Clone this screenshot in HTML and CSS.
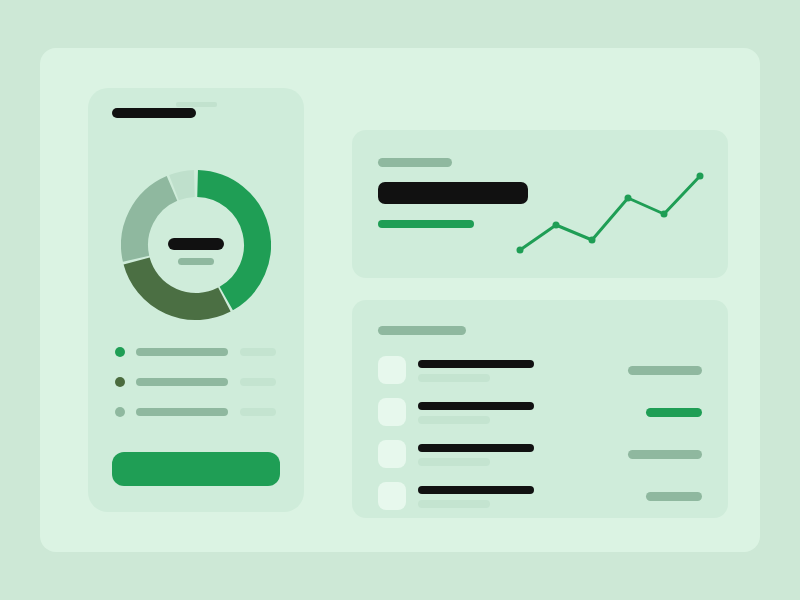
FILE: index.html
```html
<!DOCTYPE html>
<html>
<head>
<meta charset="utf-8">
<link rel="stylesheet" href="styles.css">
</head>
<body>
<div class="panel">
  <div class="side-card">
    <div class="notch"></div>
    <div class="bar title-bar"></div>
    <div class="donut">
      <svg width="150" height="150" viewBox="0 0 150 150">
        <g fill="none" stroke-width="27">
          <path d="M76.61 13.52 A61.5 61.5 0 0 1 105.28 128.53" stroke="#1f9e55"/>
          <path d="M103.40 129.55 A61.5 61.5 0 0 1 15.60 90.92" stroke="#4b6f43"/>
          <path d="M15.08 88.83 A61.5 61.5 0 0 1 50.97 18.39" stroke="#8fb89f"/>
          <path d="M52.96 17.58 A61.5 61.5 0 0 1 73.39 13.52" stroke="#bfe0cc"/>
        </g>
      </svg>
      <div class="donut-center">
        <div class="bar donut-value"></div>
        <div class="bar donut-label"></div>
      </div>
    </div>
    <div class="legend">
      <div class="legend-row"><span class="dot dot-green"></span><span class="bar legend-name"></span><span class="bar legend-val"></span></div>
      <div class="legend-row"><span class="dot dot-dark"></span><span class="bar legend-name"></span><span class="bar legend-val"></span></div>
      <div class="legend-row"><span class="dot dot-grey"></span><span class="bar legend-name"></span><span class="bar legend-val"></span></div>
    </div>
    <div class="button"></div>
  </div>
  <div class="main-col">
    <div class="card stat-card">
      <div class="stat-text">
        <div class="bar stat-label"></div>
        <div class="bar stat-value"></div>
        <div class="bar stat-delta"></div>
      </div>
      <svg class="chart" width="188" height="86" viewBox="0 0 188 86">
        <polyline points="4,80 40,55 76,70 112,28 148,44 184,6" fill="none" stroke="#1f9e55" stroke-width="3" stroke-linejoin="round" stroke-linecap="round"/>
        <g fill="#1f9e55">
          <circle cx="4" cy="80" r="3.5"/>
          <circle cx="40" cy="55" r="3.5"/>
          <circle cx="76" cy="70" r="3.5"/>
          <circle cx="112" cy="28" r="3.5"/>
          <circle cx="148" cy="44" r="3.5"/>
          <circle cx="184" cy="6" r="3.5"/>
        </g>
      </svg>
    </div>
    <div class="card list-card">
      <div class="bar list-label"></div>
      <div class="list">
        <div class="list-row">
          <div class="thumb"></div>
          <div class="row-text"><div class="bar row-title"></div><div class="bar row-sub"></div></div>
          <div class="bar row-val grey wide"></div>
        </div>
        <div class="list-row">
          <div class="thumb"></div>
          <div class="row-text"><div class="bar row-title"></div><div class="bar row-sub"></div></div>
          <div class="bar row-val green"></div>
        </div>
        <div class="list-row">
          <div class="thumb"></div>
          <div class="row-text"><div class="bar row-title"></div><div class="bar row-sub"></div></div>
          <div class="bar row-val grey wide"></div>
        </div>
        <div class="list-row">
          <div class="thumb"></div>
          <div class="row-text"><div class="bar row-title"></div><div class="bar row-sub"></div></div>
          <div class="bar row-val grey"></div>
        </div>
      </div>
    </div>
  </div>
</div>
</body>
</html>
```

FILE: styles.css
```css
* { box-sizing: border-box; }
html, body { margin: 0; padding: 0; }
body {
  width: 800px;
  height: 600px;
  background: #cde8d6;
  font-family: "Liberation Sans", Arial, sans-serif;
  padding: 48px 40px;
}
.panel {
  width: 720px;
  height: 504px;
  background: #dbf3e3;
  border-radius: 16px;
  padding: 40px 32px 0 48px;
  display: flex;
  gap: 48px;
}
.bar { display: block; border-radius: 5px; }

.side-card {
  position: relative;
  width: 216px;
  height: 424px;
  background: #cfecda;
  border-radius: 20px;
  padding: 20px 24px 0 24px;
  display: flex;
  flex-direction: column;
}
.notch {
  position: absolute;
  left: 88px;
  top: 14px;
  width: 41px;
  height: 5px;
  background: #c2e2ce;
  border-radius: 2px;
}
.title-bar { width: 84px; height: 10px; background: #111111; }
.donut {
  position: relative;
  width: 150px;
  height: 150px;
  margin: 52px auto 0 auto;
}
.donut svg { display: block; }
.donut-center {
  position: absolute;
  inset: 0;
  display: flex;
  flex-direction: column;
  align-items: center;
  gap: 8px;
  padding-top: 68px;
}
.donut-value { width: 56px; height: 12px; background: #111111; border-radius: 6px; }
.donut-label { width: 36px; height: 7px; background: #8fb89f; border-radius: 4px; }

.legend {
  margin-top: 27px;
  display: flex;
  flex-direction: column;
  gap: 20px;
}
.legend-row {
  display: flex;
  align-items: center;
  height: 10px;
  padding-left: 3px;
}
.dot { width: 10px; height: 10px; border-radius: 50%; }
.dot-green { background: #1f9e55; }
.dot-dark { background: #4b6b3e; }
.dot-grey { background: #8fb89f; }
.legend-name { width: 92px; height: 8px; background: #8fb89f; margin-left: 11px; border-radius: 4px; }
.legend-val { width: 36px; height: 8px; background: #c4e4d0; margin-left: 12px; border-radius: 4px; }
.button {
  margin-top: 35px;
  height: 34px;
  background: #1f9e55;
  border-radius: 12px;
}

.main-col {
  width: 376px;
  display: flex;
  flex-direction: column;
  gap: 22px;
  padding-top: 42px;
}
.card {
  background: #cfecda;
  border-radius: 14px;
}
.stat-card {
  height: 148px;
  padding: 28px 24px 0 26px;
  display: grid;
  grid-template-columns: minmax(0, 1fr) 188px;
  align-items: start;
}
.stat-label { width: 74px; height: 9px; background: #8fb89f; }
.stat-value { width: 150px; height: 22px; background: #111111; border-radius: 7px; margin-top: 15px; }
.stat-delta { width: 96px; height: 8px; background: #1f9e55; border-radius: 4px; margin-top: 16px; }
.chart { display: block; margin-top: 12px; }

.list-card {
  height: 218px;
  padding: 26px 26px 0 26px;
}
.list-label { width: 88px; height: 9px; background: #8fb89f; }
.list {
  margin-top: 21px;
  display: flex;
  flex-direction: column;
  gap: 14px;
}
.list-row {
  display: flex;
  align-items: center;
  height: 28px;
}
.thumb {
  width: 28px;
  height: 28px;
  border-radius: 8px;
  background: #e7f8ed;
}
.row-text {
  margin-left: 12px;
  display: flex;
  flex-direction: column;
  gap: 6px;
  padding-top: 2px;
}
.row-title { width: 116px; height: 8px; background: #111111; border-radius: 4px; }
.row-sub { width: 72px; height: 8px; background: #c4e4d0; border-radius: 4px; }
.row-val { margin-left: auto; height: 9px; width: 56px; border-radius: 5px; }
.row-val.wide { width: 74px; }
.row-val.grey { background: #8fb89f; }
.row-val.green { background: #1f9e55; }
```
